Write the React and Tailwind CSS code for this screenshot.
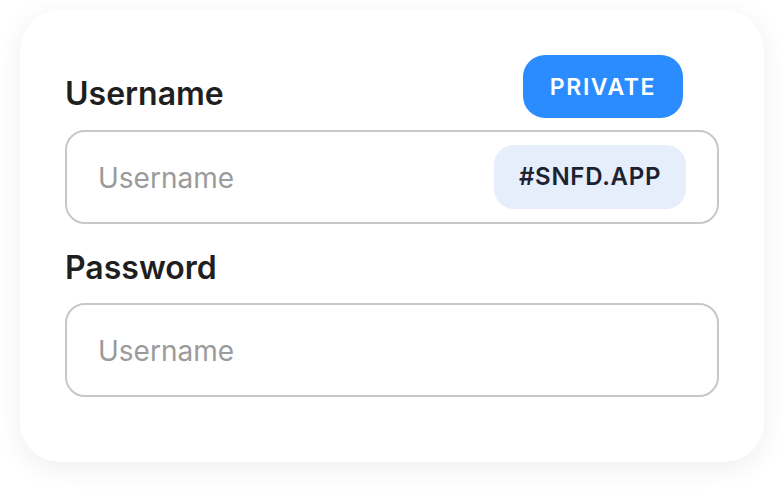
export default function App() {
  return (
    <div className="w-[784px] h-[490px] bg-white pt-[10px] pl-[20px]" style={{ fontFamily: "Inter, 'Noto Sans', sans-serif" }}>
      <div className="w-[744px] h-[452px] bg-white rounded-[40px] shadow-[0_6px_28px_rgba(0,0,0,0.07)] pt-[45px] px-[45px]">
        <div className="flex items-start justify-between pr-[36px] h-[75px]">
          <div className="text-[32px] leading-[40px] font-semibold text-[#1f1f1f] mt-[19px]">Username</div>
          <div className="w-[160px] h-[63px] rounded-[22px] bg-[#2b8cff] text-white text-[23px] font-semibold tracking-[0.07em] flex items-center justify-center pt-[2px]">PRIVATE</div>
        </div>
        <div className="h-[94px] rounded-[20px] border-2 border-[#c8c8c8] flex items-center justify-between pl-[31px] pr-[31px]">
          <span className="text-[28px] leading-[34px] text-[#9b9b9b] mt-[2px]">Username</span>
          <div className="w-[192px] h-[64px] rounded-[20px] bg-[#e6eefc] text-[#1c2230] text-[24px] font-semibold tracking-[0.03em] flex items-center justify-center">#SNFD.APP</div>
        </div>
        <div className="text-[32px] leading-[40px] font-semibold text-[#1f1f1f] mt-[24px] mb-[15px]">Password</div>
        <div className="h-[94px] rounded-[20px] border-2 border-[#c8c8c8] flex items-center pl-[31px]">
          <span className="text-[28px] leading-[34px] text-[#9b9b9b] mt-[2px]">Username</span>
        </div>
      </div>
    </div>
  );
}
